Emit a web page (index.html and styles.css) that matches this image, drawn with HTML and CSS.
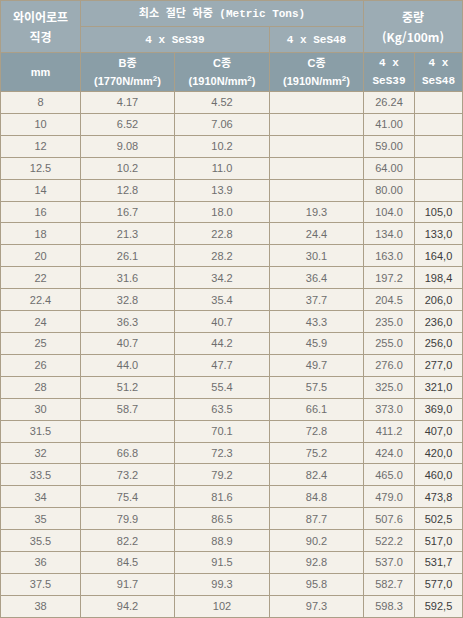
FILE: index.html
```html
<!DOCTYPE html>
<html lang="ko">
<head>
<meta charset="utf-8">
<title>와이어로프 규격</title>
<link rel="stylesheet" href="styles.css">
</head>
<body>
<table class="spec">
  <colgroup>
    <col class="c1"><col class="c2"><col class="c3"><col class="c4"><col class="c5"><col class="c6">
  </colgroup>
  <thead>
    <tr class="h1">
      <th rowspan="2" class="ko two">와이어로프<br>직경</th>
      <th colspan="3" class="mix">최소 절단 하중 (Metric Tons)</th>
      <th colspan="2" rowspan="2" class="ko two">중량<br>(Kg/100m)</th>
    </tr>
    <tr class="h2">
      <th colspan="2" class="mono">4 x SeS39</th>
      <th class="mono">4 x SeS48</th>
    </tr>
    <tr class="h3">
      <th class="sub">mm</th>
      <th class="sub">B종<br>(1770N/mm<sup>2</sup>)</th>
      <th class="sub">C종<br>(1910N/mm<sup>2</sup>)</th>
      <th class="sub">C종<br>(1910N/mm<sup>2</sup>)</th>
      <th class="sub mono">4 x<br>SeS39</th>
      <th class="sub mono">4 x<br>SeS48</th>
    </tr>
  </thead>
  <tbody>
    <tr><td>8</td><td>4.17</td><td>4.52</td><td></td><td>26.24</td><td class="alt"></td></tr>
    <tr><td>10</td><td>6.52</td><td>7.06</td><td></td><td>41.00</td><td class="alt"></td></tr>
    <tr><td>12</td><td>9.08</td><td>10.2</td><td></td><td>59.00</td><td class="alt"></td></tr>
    <tr><td>12.5</td><td>10.2</td><td>11.0</td><td></td><td>64.00</td><td class="alt"></td></tr>
    <tr><td>14</td><td>12.8</td><td>13.9</td><td></td><td>80.00</td><td class="alt"></td></tr>
    <tr><td>16</td><td>16.7</td><td>18.0</td><td>19.3</td><td>104.0</td><td class="alt">105,0</td></tr>
    <tr><td>18</td><td>21.3</td><td>22.8</td><td>24.4</td><td>134.0</td><td class="alt">133,0</td></tr>
    <tr><td>20</td><td>26.1</td><td>28.2</td><td>30.1</td><td>163.0</td><td class="alt">164,0</td></tr>
    <tr><td>22</td><td>31.6</td><td>34.2</td><td>36.4</td><td>197.2</td><td class="alt">198,4</td></tr>
    <tr><td>22.4</td><td>32.8</td><td>35.4</td><td>37.7</td><td>204.5</td><td class="alt">206,0</td></tr>
    <tr><td>24</td><td>36.3</td><td>40.7</td><td>43.3</td><td>235.0</td><td class="alt">236,0</td></tr>
    <tr><td>25</td><td>40.7</td><td>44.2</td><td>45.9</td><td>255.0</td><td class="alt">256,0</td></tr>
    <tr><td>26</td><td>44.0</td><td>47.7</td><td>49.7</td><td>276.0</td><td class="alt">277,0</td></tr>
    <tr><td>28</td><td>51.2</td><td>55.4</td><td>57.5</td><td>325.0</td><td class="alt">321,0</td></tr>
    <tr><td>30</td><td>58.7</td><td>63.5</td><td>66.1</td><td>373.0</td><td class="alt">369,0</td></tr>
    <tr><td>31.5</td><td></td><td>70.1</td><td>72.8</td><td>411.2</td><td class="alt">407,0</td></tr>
    <tr><td>32</td><td>66.8</td><td>72.3</td><td>75.2</td><td>424.0</td><td class="alt">420,0</td></tr>
    <tr><td>33.5</td><td>73.2</td><td>79.2</td><td>82.4</td><td>465.0</td><td class="alt">460,0</td></tr>
    <tr><td>34</td><td>75.4</td><td>81.6</td><td>84.8</td><td>479.0</td><td class="alt">473,8</td></tr>
    <tr><td>35</td><td>79.9</td><td>86.5</td><td>87.7</td><td>507.6</td><td class="alt">502,5</td></tr>
    <tr><td>35.5</td><td>82.2</td><td>88.9</td><td>90.2</td><td>522.2</td><td class="alt">517,0</td></tr>
    <tr><td>36</td><td>84.5</td><td>91.5</td><td>92.8</td><td>537.0</td><td class="alt">531,7</td></tr>
    <tr><td>37.5</td><td>91.7</td><td>99.3</td><td>95.8</td><td>582.7</td><td class="alt">577,0</td></tr>
    <tr><td>38</td><td>94.2</td><td>102</td><td>97.3</td><td>598.3</td><td class="alt">592,5</td></tr>
  </tbody>
</table>
</body>
</html>
```

FILE: styles.css
```css
html, body {
  margin: 0;
  padding: 0;
  background: #f4f1ea;
}

.spec {
  width: 463px;
  table-layout: fixed;
  border-collapse: separate;
  border-spacing: 1px;
  background: #ab9f88;
  font-family: "Liberation Sans", "Noto Sans CJK KR", sans-serif;
}

.c1 { width: 79px; }
.c2 { width: 93px; }
.c3 { width: 94px; }
.c4 { width: 93px; }
.c5 { width: 50px; }
.c6 { width: 47px; }

.spec th {
  padding: 0;
  color: #ffffff;
  font-weight: bold;
  text-align: center;
  vertical-align: middle;
}

.h1 th, .h2 th {
  background: #9cacb4;
  height: 25px;
}

.h3 th {
  background: #8a9ea7;
  height: 38px;
}

.ko {
  font-family: "Noto Sans CJK KR", sans-serif;
  font-size: 12px;
  line-height: 20px;
}

.two {
  height: 51px;
}

.mix, .mono {
  font-family: "Liberation Mono", "Noto Sans CJK KR", monospace;
  font-size: 11px;
  line-height: 18px;
}

.sub {
  font-family: "Liberation Sans", "Noto Sans CJK KR", sans-serif;
  font-size: 11px;
  line-height: 18px;
}

.sub.mono {
  font-family: "Liberation Mono", "Noto Sans CJK KR", monospace;
}

.spec sup {
  font-size: 8px;
  line-height: 0;
  vertical-align: 4px;
}

.spec td {
  background: #f4f1ea;
  height: 20.92px;
  padding: 0;
  text-align: center;
  vertical-align: middle;
  font-size: 11px;
  line-height: 14px;
  color: #6e6e6e;
}

.spec td.alt {
  color: #3c3c3c;
}
```
